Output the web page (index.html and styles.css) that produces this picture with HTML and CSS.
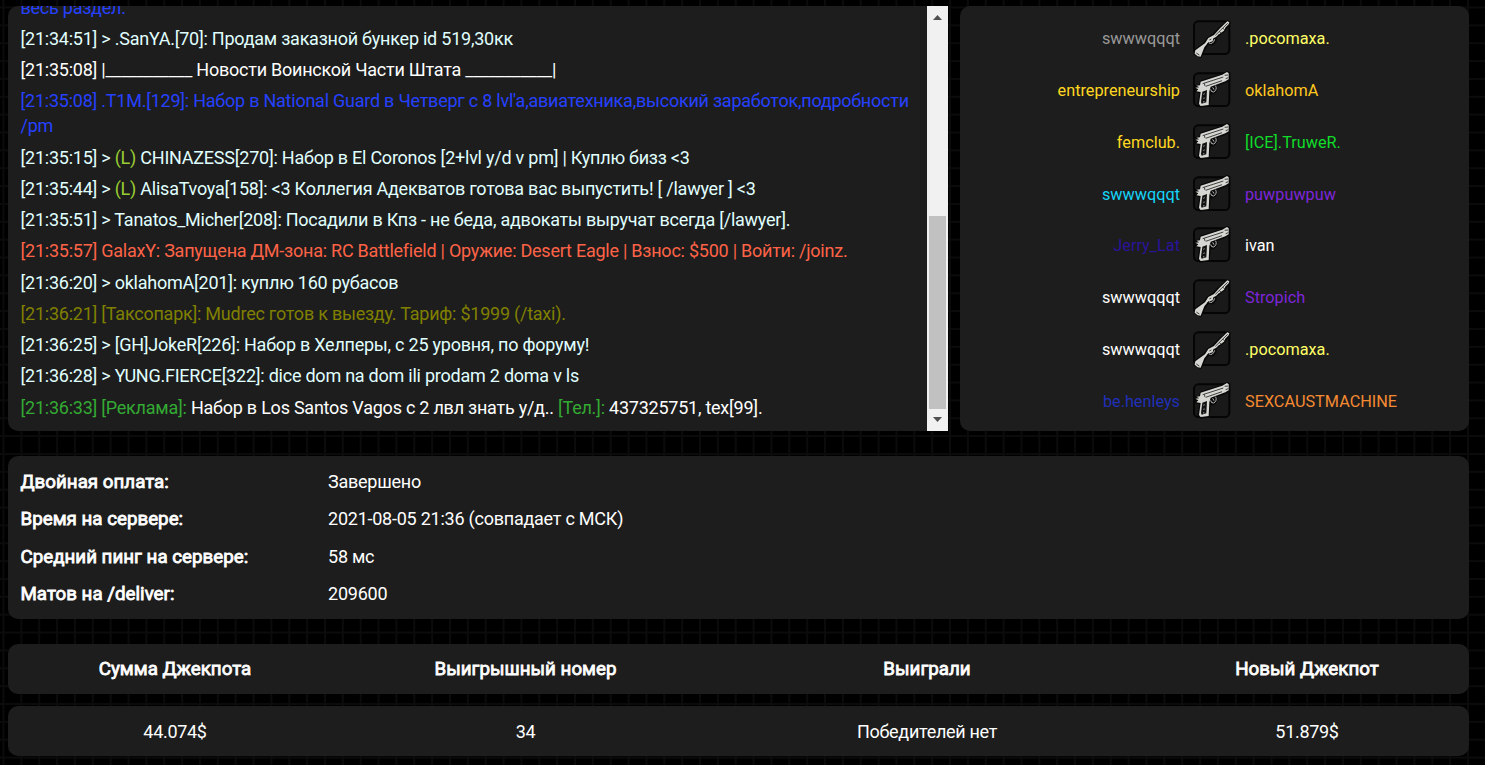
FILE: index.html
```html
<!DOCTYPE html>
<html lang="ru">
<head>
<meta charset="utf-8">
<title>Статистика сервера</title>
<link rel="stylesheet" href="styles.css">
</head>
<body>
<svg class="defs" width="0" height="0">
  <symbol id="shotgun" viewBox="12 18 120 123">
    <rect class="frame" x="18" y="28" width="106" height="98" rx="13"/>
    <g class="outline"><path d="M118 27L126 31L124 38L108 58L96 66L84 76L83 88L74 98L60 96L52 108L38 136L19 126L21 114L48 94L60 78L76 67L92 50Z"/></g>
    <path class="metal" d="M118 28L124 31L122 37L84 75L76 79L74 88L60 92L49 106L38 134L29 133L20 125L22 115L51 94L61 78L78 69L94 51Z"/>
    <path class="metal" d="M112 47L108 56L94 66L88 64L103 48Z"/>
    <path class="ring" d="M62 92Q74 100 80 82"/>
    <path class="detail" d="M119 34L82 70M64 84L70 81M57 96L63 91M25 123L34 129M104 48L110 54M94 58L99 64"/>
  </symbol>
  <symbol id="pistol" viewBox="12 18 120 123">
    <rect class="frame" x="18" y="28" width="106" height="98" rx="13"/>
    <g class="outline"><path d="M22 65L35 64L38 52L104 31L117 23L125 27L124 48L112 55L86 64Q88 82 76 88L66 89L62 125L36 129L31 118L37 86L22 82Z"/></g>
    <path class="metal" d="M38 53L103 32L117 24L122 28L122 46L112 52L68 68L64 82L62 123L38 126L33 120L38 84L25 82L31 76L22 71L34 70L25 65L36 64Z"/>
    <path class="ring" d="M83 65Q88 78 77 84Q69 85 68 76M74 70L78 77"/>
    <path class="detail" d="M44 59L106 39M53 67L102 50M49 58L51 66M110 34L120 33M113 44L121 41"/>
    <path class="grip" d="M43 83L57 78L55 115L41 119L39 114Z"/>
    <path class="dots" d="M46 91L50 89M46 103L50 102M45 114L49 113"/>
  </symbol>
</svg>
<main class="page">
  <section class="top">
    <div class="panel chat">
      <div class="log">
        <p class="blue">весь раздел.</p>
        <p>[21:34:51] &gt; .SanYA.[70]: Продам заказной бункер id 519,30кк</p>
        <p class="white">[21:35:08] |___________ Новости Воинской Части Штата ___________|</p>
        <p class="blue">[21:35:08] .T1M.[129]: Набор в National Guard в Четверг с 8 lvl'a,авиатехника,высокий заработок,подробности<br>/pm</p>
        <p>[21:35:15] &gt; <span class="lime">(L)</span> CHINAZESS[270]: Набор в El Coronos [2+lvl y/d v pm] | Куплю бизз &lt;3</p>
        <p>[21:35:44] &gt; <span class="lime">(L)</span> AlisaTvoya[158]: &lt;3 Коллегия Адекватов готова вас выпустить! [ /lawyer ] &lt;3</p>
        <p>[21:35:51] &gt; Tanatos_Micher[208]: Посадили в Кпз - не беда, адвокаты выручат всегда [/lawyer].</p>
        <p class="red">[21:35:57] GalaxY: Запущена ДМ-зона: RC Battlefield | Оружие: Desert Eagle | Взнос: $500 | Войти: /joinz.</p>
        <p>[21:36:20] &gt; oklahomA[201]: куплю 160 рубасов</p>
        <p class="olive">[21:36:21] [Таксопарк]: Mudrec готов к выезду. Тариф: $1999 (/taxi).</p>
        <p>[21:36:25] &gt; [GH]JokeR[226]: Набор в Хелперы, с 25 уровня, по форуму!</p>
        <p>[21:36:28] &gt; YUNG.FIERCE[322]: dice dom na dom ili prodam 2 doma v ls</p>
        <p class="white"><span class="green">[21:36:33] [Реклама]:</span> Набор в Los Santos Vagos с 2 лвл знать у/д.. <span class="green">[Тел.]:</span> 437325751, tex[99].</p>
      </div>
      <div class="scrollbar">
        <svg width="21" height="21" viewBox="0 0 21 21"><path d="M6 14L10.500 9L15 14Z"/></svg>
        <div class="track"><div class="thumb"></div></div>
        <svg width="21" height="21" viewBox="0 0 21 21"><path d="M6 7L10.500 12L15 7Z"/></svg>
      </div>
    </div>
    <div class="panel kills">
      <div class="kill"><span class="gray">swwwqqqt</span><svg><use href="#shotgun"/></svg><span class="yellow">.pocomaxa.</span></div>
      <div class="kill"><span class="gold">entrepreneurship</span><svg><use href="#pistol"/></svg><span class="amber">oklahomA</span></div>
      <div class="kill"><span class="gold">femclub.</span><svg><use href="#pistol"/></svg><span class="ice">[ICE].TruweR.</span></div>
      <div class="kill"><span class="cyan">swwwqqqt</span><svg><use href="#pistol"/></svg><span class="purple">puwpuwpuw</span></div>
      <div class="kill"><span class="indigo">Jerry_Lat</span><svg><use href="#pistol"/></svg><span class="white">ivan</span></div>
      <div class="kill"><span class="white">swwwqqqt</span><svg><use href="#shotgun"/></svg><span class="purple">Stropich</span></div>
      <div class="kill"><span class="white">swwwqqqt</span><svg><use href="#shotgun"/></svg><span class="yellow">.pocomaxa.</span></div>
      <div class="kill"><span class="navy">be.henleys</span><svg><use href="#pistol"/></svg><span class="orange">SEXCAUSTMACHINE</span></div>
    </div>
  </section>
  <dl class="panel info">
    <dt>Двойная оплата:</dt><dd>Завершено</dd>
    <dt>Время на сервере:</dt><dd>2021-08-05 21:36 (совпадает с МСК)</dd>
    <dt>Средний пинг на сервере:</dt><dd>58 мс</dd>
    <dt>Матов на /deliver:</dt><dd>209600</dd>
  </dl>
  <section class="jackpot">
    <div class="panel row head"><span>Сумма Джекпота</span><span>Выигрышный номер</span><span>Выиграли</span><span>Новый Джекпот</span></div>
    <div class="panel row"><span>44.074$</span><span>34</span><span>Победителей нет</span><span>51.879$</span></div>
  </section>
</main>
</body>
</html>
```
FILE: styles.css
```css
* { box-sizing: border-box; }
body {
  margin: 0;
  height: 765px;
  overflow: hidden;
  background-color: #000;
  background-image:
    linear-gradient(90deg, #0b0b0b 2px, transparent 2px),
    linear-gradient(#0b0b0b 2px, transparent 2px);
  background-size: 17.86px 17.86px;
  background-position: 2.5px 6.5px;
  color: #fff;
  font-family: Roboto, sans-serif;
  font-size: 18px;
  letter-spacing: -0.3px;
}
.defs { position: absolute; }
.page { padding: 6px 16px 0 8px; }
.panel { background: #1d1d1d; border-radius: 10px; }
.top { display: flex; gap: 12px; height: 425px; }
.chat { width: 940px; display: flex; overflow: hidden; border-radius: 10px 0 0 10px; }
.log {
  flex: 1;
  min-width: 0;
  padding: 0 12px 11.5px 12.5px;
  display: flex;
  flex-direction: column;
  justify-content: flex-end;
  gap: 6.25px;
  color: #e0ffff;
  letter-spacing: -0.24px;
}
.log p { margin: 0; line-height: 25px; white-space: nowrap; }
.log .white, .white { color: #fff; }
.log .blue { color: #2641fe; }
.lime { color: #9acd32; }
.log .red { color: #ff6347; }
.log .olive { color: #808000; }
.green { color: #33aa33; }
.scrollbar { width: 21px; background: #f1f1f1; display: flex; flex-direction: column; }
.scrollbar svg { display: block; fill: #505050; }
.track { flex: 1; padding: 0 2px 1px; display: flex; align-items: flex-end; }
.thumb { width: 17px; height: 193px; background: #c1c1c1; }
.kills {
  flex: 1;
  padding-top: 6.5px;
  font-size: 16.25px;
  letter-spacing: 0;
}
.kill {
  height: 51.86px;
  display: grid;
  grid-template-columns: 220px 40px 1fr;
  column-gap: 12px;
  align-items: center;
}
.kill span:first-child { text-align: right; }
.kill span:last-child { padding-left: 1px; }
.kill svg { width: 40px; height: 41px; }
.frame { fill: #191919; stroke: #050505; stroke-width: 6; }
.outline { fill: #090909; stroke: #090909; stroke-width: 5; stroke-linejoin: round; }
.metal { fill: #d6d6d2; }
.ring { fill: none; stroke: #bbb; stroke-width: 3; }
.detail { fill: none; stroke: #222; stroke-width: 2.5; }
.grip { fill: #111; }
.dots { fill: none; stroke: #aaa; stroke-width: 3; }
.gray { color: #999; }
.yellow { color: #ffff66; }
.gold { color: #ffd720; }
.amber { color: #ffc820; }
.ice { color: #10dc29; }
.cyan { color: #15d4f8; }
.purple { color: #7d25d9; }
.indigo { color: #2a1499; }
.navy { color: #2030b8; }
.orange { color: #f58a32; }
.info {
  margin: 25px 0;
  height: 163px;
  padding: 6.5px 12px;
  display: grid;
  grid-template-columns: 308px 1fr;
  grid-auto-rows: 37.5px;
  line-height: 37.5px;
  letter-spacing: -0.24px;
}
.info dd { margin: 0; }
.info dt, .head { -webkit-text-stroke: 0.8px #fff; font-size: 18.75px; letter-spacing: 0; }
.info dt { padding: 1px 0 0 0.5px; }
.jackpot { display: flex; flex-direction: column; gap: 12px; }
.row {
  height: 50px;
  display: grid;
  grid-template-columns: 334px 367px 436px 324px;
  align-items: center;
  text-align: center;
}
.head { padding-bottom: 1px; }
```
